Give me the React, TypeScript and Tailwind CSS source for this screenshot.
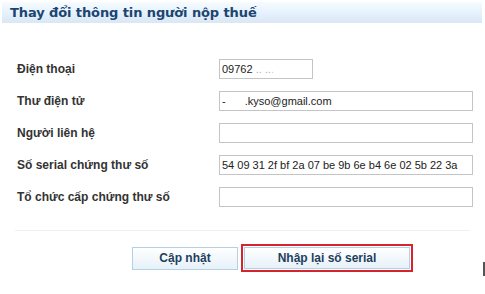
import React from 'react';

const font = { fontFamily: '"Liberation Sans", Arial, sans-serif' };

const rows: { label: string; value?: React.ReactNode; short?: boolean }[] = [
  {
    label: 'Điện thoại',
    short: true,
    value: (
      <span>
        09762<span className="text-[#b0b0b0]"> .. ..</span>
        <span className="text-[#c8c8c8]">.</span>
      </span>
    ),
  },
  {
    label: 'Thư điện tử',
    value: (
      <span>
        -<span className="inline-block w-[19px]" />.kyso@gmail.com
      </span>
    ),
  },
  { label: 'Người liên hệ' },
  { label: 'Số serial chứng thư số', value: '54 09 31 2f bf 2a 07 be 9b 6e b4 6e 02 5b 22 3a' },
  { label: 'Tổ chức cấp chứng thư số' },
];

export default function App() {
  return (
    <div className="relative h-[294px] w-[485px] overflow-hidden bg-white" style={font}>
      {/* tiêu đề */}
      <div className="flex h-[24px] items-center pt-[1px]">
        <div className="ml-[2px] flex h-[21px] w-[480px] items-center bg-gradient-to-b from-[#f6fbff] via-[#e6f2fd] to-[#dae7f4] pl-[8px]">
          <span className="font-['DejaVu_Sans'] text-[13px] font-bold tracking-[-0.1px] text-[#1a4570]">
            Thay đổi thông tin người nộp thuế
          </span>
        </div>
      </div>

      {/* form */}
      <div className="mt-[35px] flex flex-col gap-[12px] pl-[17px]">
        {rows.map((row) => (
          <div key={row.label} className="flex h-[20px] items-center">
            <div className="w-[202px] text-[12px] font-bold text-[#333]">{row.label}</div>
            <div
              className={`flex h-[20px] items-center whitespace-nowrap border border-[#c4c4c4] bg-white px-[2px] text-[11px] text-[#222] ${
                row.short ? 'w-[94px]' : 'w-[254px]'
              }`}
            >
              {row.value}
            </div>
          </div>
        ))}
      </div>

      <div className="ml-[15px] mt-[23px] h-px w-[455px] bg-[#f0f0f0]" />

      {/* nút */}
      <div className="mt-[13px] flex items-center pl-[132px]">
        <button className="flex h-[23px] w-[106px] items-center justify-center border border-[#b5d0e4] bg-gradient-to-b from-white to-[#e6f1f9] text-[12px] font-bold text-[#1f3f5e]">
          Cập nhật
        </button>
        <div className="ml-[3px] border-[2px] border-[#d6242d] p-[1px]">
          <button className="flex h-[22px] w-[166px] items-center justify-center border border-[#b5d0e4] bg-gradient-to-b from-white to-[#e6f1f9] text-[12px] font-bold text-[#1f3f5e]">
            Nhập lại số serial
          </button>
        </div>
      </div>

      <div className="absolute left-[483px] top-[262px] h-[14px] w-[2px] bg-[#555]" />
    </div>
  );
}
